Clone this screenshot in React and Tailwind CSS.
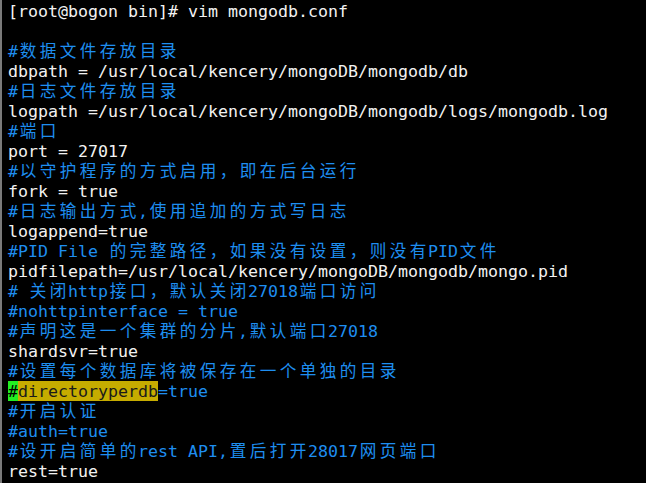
import React from 'react'

const lines = [
  { t: '[root@bogon bin]# vim mongodb.conf' },
  { t: '' },
  { t: '#数据文件存放目录', c: true },
  { t: 'dbpath = /usr/local/kencery/mongoDB/mongodb/db' },
  { t: '#日志文件存放目录', c: true },
  { t: 'logpath =/usr/local/kencery/mongoDB/mongodb/logs/mongodb.log' },
  { t: '#端口', c: true },
  { t: 'port = 27017' },
  { t: '#以守护程序的方式启用，即在后台运行', c: true },
  { t: 'fork = true' },
  { t: '#日志输出方式,使用追加的方式写日志', c: true },
  { t: 'logappend=true' },
  { t: '#PID File 的完整路径，如果没有设置，则没有PID文件', c: true },
  { t: 'pidfilepath=/usr/local/kencery/mongoDB/mongodb/mongo.pid' },
  { t: '# 关闭http接口，默认关闭27018端口访问', c: true },
  { t: '#nohttpinterface = true', c: true },
  { t: '#声明这是一个集群的分片,默认端口27018', c: true },
  { t: 'shardsvr=true' },
  { t: '#设置每个数据库将被保存在一个单独的目录', c: true },
  { t: 'HIGHLIGHT' },
  { t: '#开启认证', c: true },
  { t: '#auth=true', c: true },
  { t: '#设开启简单的rest API,置后打开28017网页端口', c: true },
  { t: 'rest=true' },
]

// split text into ascii runs and double-width cells like a terminal
function Cells({ text }) {
  const parts = []
  let run = ''
  for (const ch of text) {
    if (ch.charCodeAt(0) > 0x2e80) {
      if (run) parts.push(run)
      run = ''
      parts.push({ w: ch })
    } else {
      run += ch
    }
  }
  if (run) parts.push(run)
  return parts.map((p, i) =>
    typeof p === 'string' ? (
      <span key={i} className="whitespace-pre">{p}</span>
    ) : (
      <span key={i} className="inline-block w-[20px] text-center">{p.w}</span>
    )
  )
}

export default function App() {
  return (
    <div className="w-[646px] h-[483px] bg-black flex overflow-hidden">
      <div className="w-[2px] bg-[#7a7a7a] shrink-0" />
      <div className="pt-[1px] pl-[6px] font-['DejaVu_Sans_Mono','Noto_Sans_CJK_SC',monospace] text-[16.61px] leading-[20px] text-[#f2f2f2]">
        {lines.map((l, i) =>
          l.t === 'HIGHLIGHT' ? (
            <div key={i} className="h-[20px] whitespace-pre flex">
              <span className="h-[20px] pt-[1px] bg-[#22ee22] text-black">#</span>
              <span className="h-[20px] pt-[1px] bg-[#c6ac00] text-[#1a1a1a]">directoryperdb</span>
              <span className="h-[20px] pt-[1px] text-[#1e8ef0]">=true</span>
            </div>
          ) : (
            <div key={i} className={`h-[20px] pt-[1px] whitespace-pre ${l.c ? 'text-[#1e8ef0]' : ''}`}>
              <Cells text={l.t} />
            </div>
          )
        )}
      </div>
    </div>
  )
}
